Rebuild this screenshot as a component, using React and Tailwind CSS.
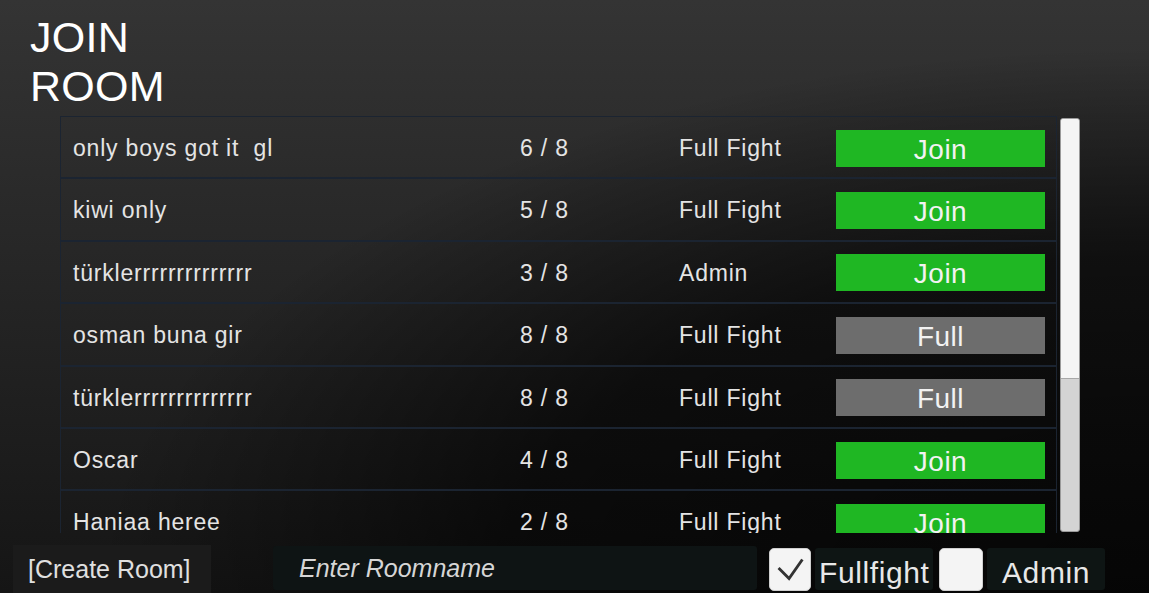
import React from "react";

const rooms = [
  { name: "only boys got it  gl", players: "6 / 8", mode: "Full Fight", full: false },
  { name: "kiwi only", players: "5 / 8", mode: "Full Fight", full: false },
  { name: "türklerrrrrrrrrrrrrr", players: "3 / 8", mode: "Admin", full: false },
  { name: "osman buna gir", players: "8 / 8", mode: "Full Fight", full: true },
  { name: "türklerrrrrrrrrrrrrr", players: "8 / 8", mode: "Full Fight", full: true },
  { name: "Oscar", players: "4 / 8", mode: "Full Fight", full: false },
  { name: "Haniaa heree", players: "2 / 8", mode: "Full Fight", full: false },
];

const RoomRow = ({ room }) => (
  <div className="flex h-[62.4px] shrink-0 items-center border border-[#1b2431] pt-[2px] text-[23px] tracking-[0.8px] text-[#e4e4e4]">
    <div className="w-[459px] pl-[12px] whitespace-pre">{room.name}</div>
    <div className="w-[159px]">{room.players}</div>
    <div className="w-[157px]">{room.mode}</div>
    <button
      className={
        room.full
          ? "h-[37px] w-[209px] bg-[#6d6d6d] pt-[3px] text-[28px] leading-none tracking-[0.5px] text-[#f2f2f2]"
          : "h-[37px] w-[209px] bg-[#1fb723] pt-[3px] text-[28px] leading-none tracking-[0.5px] text-[#f2f2f2]"
      }
    >
      {room.full ? "Full" : "Join"}
    </button>
  </div>
);

const JoinRoom = () => {
  return (
    <div className="flex h-[593px] w-full flex-col overflow-hidden bg-[radial-gradient(ellipse_at_100%_100%,rgba(0,0,0,0.75)_0%,rgba(0,0,0,0.6)_40%,transparent_65%),linear-gradient(180deg,#343434,#151515)] font-['Liberation_Sans',Arial,sans-serif]">
      <h1 className="pl-[30px] pt-[13px] text-[43px] font-normal leading-[49px] tracking-[0.3px] text-white">
        JOIN
        <br />
        ROOM
      </h1>

      <div className="mt-[5px] flex">
        <div className="ml-[60px] flex h-[417px] w-[997px] flex-col overflow-hidden">
          {rooms.map((room, i) => (
            <RoomRow key={i} room={room} />
          ))}
        </div>
        <div className="ml-[3px] mt-[2px] flex h-[414px] w-[20px] flex-col overflow-hidden rounded-[3px] border border-[#9a9a9a] bg-[#d4d4d4]">
          <div className="h-[260px] border-b border-[#a8a8a8] bg-[#f5f5f5]" />
        </div>
      </div>

      <div className="mt-[12px] flex items-start">
        <button className="ml-[13px] h-[48px] w-[198px] bg-[#1b1b1b] pl-[15px] pt-[2px] text-left text-[25px] text-[#e0e0e0]">
          [Create Room]
        </button>
        <div className="ml-[62px] mt-[1px] flex h-[44px] w-[484px] items-center rounded-[3px] bg-[#0e1414] pl-[26px] pt-[2px] text-[25px] italic text-[#d6d6d6]">
          Enter Roomname
        </div>
        <div className="ml-[12px] mt-[3px] flex h-[43px] w-[42px] items-center justify-center rounded-[5px] border border-[#cfcfcf] bg-[#f4f4f4]">
          <svg width="42" height="43" viewBox="0 0 42 43" fill="none">
            <polyline points="9,20 20,31 34,11" stroke="#333333" strokeWidth="3" />
          </svg>
        </div>
        <div className="ml-[4px] mt-[3px] flex h-[42px] w-[118px] items-center rounded-[3px] bg-[#0e1514] pl-[4px] pt-[6px] text-[30px] tracking-[0.6px] text-[#e8e8e8]">
          Fullfight
        </div>
        <div className="ml-[6px] mt-[3px] h-[43px] w-[44px] rounded-[5px] border border-[#cfcfcf] bg-[#f4f4f4]" />
        <div className="ml-[4px] mt-[3px] flex h-[42px] w-[118px] items-center rounded-[3px] bg-[#0e1514] pl-[15px] pt-[6px] text-[30px] tracking-[0.6px] text-[#e8e8e8]">
          Admin
        </div>
      </div>
    </div>
  );
};

export default JoinRoom;
